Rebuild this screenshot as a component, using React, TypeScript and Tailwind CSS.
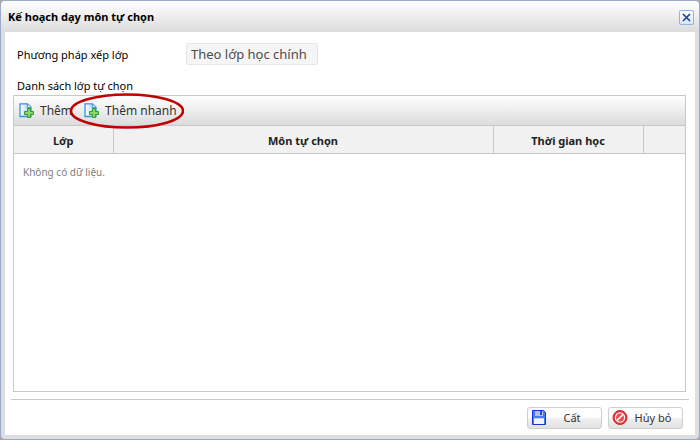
import React from "react";

const columns = [
	{ title: "Lớp", width: "w-[99px]" },
	{ title: "Môn tự chọn", width: "" },
	{ title: "Thời gian học", width: "w-[150px]" },
];

function AddIcon() {
	return (
		<svg className="w-4 h-4 shrink-0" viewBox="0 0 16 16" aria-hidden="true">
			<defs>
				<linearGradient id="page" x1="0" x2="1">
					<stop offset="0" stopColor="#ffffff" />
					<stop offset="1" stopColor="#9fd0f3" />
				</linearGradient>
			</defs>
			<path
				d="M1 .8H8.5L12 4.3V13.5H1Z"
				fill="url(#page)"
				stroke="#3b93d9"
				strokeWidth="1.3"
			/>
			<path d="M8.3 1V4.6H12" fill="#d9eefb" stroke="#3b93d9" />
			<path
				d="M8.5 5.5H11.5V8.5H14.5V11.5H11.5V14.5H8.5V11.5H5.5V8.5H8.5Z"
				fill="#8ad568"
				stroke="#2f9a28"
			/>
		</svg>
	);
}

function SaveIcon() {
	return (
		<svg className="w-4 h-4 shrink-0" viewBox="0 0 16 16" aria-hidden="true">
			<path d="M1.5 .5H12.5L14.5 2.5V14.5H1.5Z" fill="#4a7bf5" stroke="#1437d8" />
			<rect x="4" y="1" width="8" height="5" fill="#b5c3da" />
			<rect x="9" y="1" width="2" height="4" fill="#2450d8" />
			<rect x="3" y="8" width="10" height="6" fill="#f0f4fa" />
			<path d="M3 8.5H13" stroke="#c9d3e2" />
		</svg>
	);
}

function CancelIcon() {
	return (
		<svg className="w-4 h-4 shrink-0" viewBox="0 0 16 16" aria-hidden="true">
			<circle cx="8" cy="7.5" r="7" fill="#e5343a" stroke="#cf2a30" />
			<circle
				cx="8"
				cy="7.5"
				r="4.6"
				fill="#e5484d"
				stroke="#ffe9e9"
				strokeWidth="1.3"
			/>
			<path d="M4.8 10.7L11.2 4.3" stroke="#ffe9e9" strokeWidth="1.8" />
		</svg>
	);
}

function FooterButton({
	icon,
	children,
}: {
	icon: React.ReactNode;
	children: React.ReactNode;
}) {
	return (
		<button
			type="button"
			className="flex items-center w-[75px] h-[22px] pl-[3px] pr-1 rounded-[3px] border border-[#cfcfcf] bg-gradient-to-b from-white from-45% via-[#eeeeee] via-55% to-[#e2e2e2] text-[11px] text-[#333]"
		>
			{icon}
			<span className="flex-1 text-center">{children}</span>
		</button>
	);
}

export default function App() {
	return (
		<div className="min-h-screen flex bg-[#a8a8a8] font-['Noto_Sans',sans-serif] text-black">
			<section
				aria-labelledby="dialog-title"
				className="flex-1 flex flex-col rounded-[5px] border border-[#9aaac9] bg-[#dedee0] px-1 pb-1"
			>
				{/* Title bar */}
				<header className="-mx-1 h-[31px] flex items-center justify-between rounded-t-[4px] bg-gradient-to-b from-white to-[#dcdcdc] pl-[7px] pr-[5px] pt-[2px]">
					<h1 id="dialog-title" className="text-[11px] font-bold">
						Kế hoạch dạy môn tự chọn
					</h1>
					<button
						type="button"
						aria-label="Đóng"
						className="w-[15px] h-[15px] flex items-center justify-center rounded-[2px] border border-[#8db5ea] bg-gradient-to-b from-white to-[#d5e6f7]"
					>
						<svg className="w-[9px] h-[9px]" viewBox="0 0 9 9">
							<path
								d="M1 1L8 8M8 1L1 8"
								stroke="#24409a"
								strokeWidth="1.7"
							/>
						</svg>
					</button>
				</header>

				<div className="flex-1 flex flex-col bg-white">
					{/* Form */}
					<div className="flex items-center pl-3 pt-[11px]">
						<label htmlFor="method" className="w-[169px] pt-[3px] text-[11px]">
							Phương pháp xếp lớp
						</label>
						<input
							id="method"
							type="text"
							disabled
							defaultValue="Theo lớp học chính"
							className="w-[132px] h-[22px] px-1 rounded-[2px] border border-[#e6e6e6] bg-[#f5f5f5] text-[13px] text-[#4c4c4c]"
						/>
					</div>
					<h2 className="pl-3 pt-3 text-[11px] leading-[18px]">
						Danh sách lớp tự chọn
					</h2>

					{/* Class list */}
					<div className="flex-1 ml-2 mr-[9px] border border-[#c8c8c8]">
						<div className="h-[30px] flex items-center gap-3 pl-[5px] pt-px border-b border-[#c8c8c8] bg-gradient-to-b from-white to-[#dcdcdc] text-[12px] text-[#333]">
							<button type="button" className="flex items-center gap-[5px]">
								<AddIcon />
								Thêm
							</button>
							<button
								type="button"
								className="relative flex items-center gap-[5px]"
							>
								<AddIcon />
								Thêm nhanh
								<svg
									className="absolute -left-4 top-1/2 -translate-y-1/2 w-[116px] h-9 pointer-events-none"
									viewBox="0 0 116 36"
									aria-hidden="true"
								>
									<ellipse
										cx="59"
										cy="18"
										rx="56"
										ry="16.5"
										fill="none"
										stroke="#c00000"
										strokeWidth="2.6"
									/>
								</svg>
							</button>
						</div>
						<table className="w-full table-fixed border-collapse">
							<thead>
								<tr className="h-[27px] bg-[#f1f1f1] border-b border-[#c8c8c8] text-[11px] text-[#222]">
									{columns.map((column) => (
										<th
											key={column.title}
											className={`${column.width} p-0 pt-1 border-r border-[#c8c8c8] font-bold`}
										>
											{column.title}
										</th>
									))}
									<th className="w-[42px]" />
								</tr>
							</thead>
							<tbody>
								<tr>
									<td
										colSpan={4}
										className="px-[9px] pt-[9px] text-[10px] leading-[18px] text-[#808080]"
									>
										Không có dữ liệu.
									</td>
								</tr>
							</tbody>
						</table>
					</div>

					{/* Actions */}
					<footer className="mt-[7px] mx-[6px] flex justify-end gap-[6px] border-t border-[#c8c8c8] pt-[7px] pr-[6px] pb-[6px]">
						<FooterButton icon={<SaveIcon />}>Cất</FooterButton>
						<FooterButton icon={<CancelIcon />}>Hủy bỏ</FooterButton>
					</footer>
				</div>
			</section>
		</div>
	);
}
